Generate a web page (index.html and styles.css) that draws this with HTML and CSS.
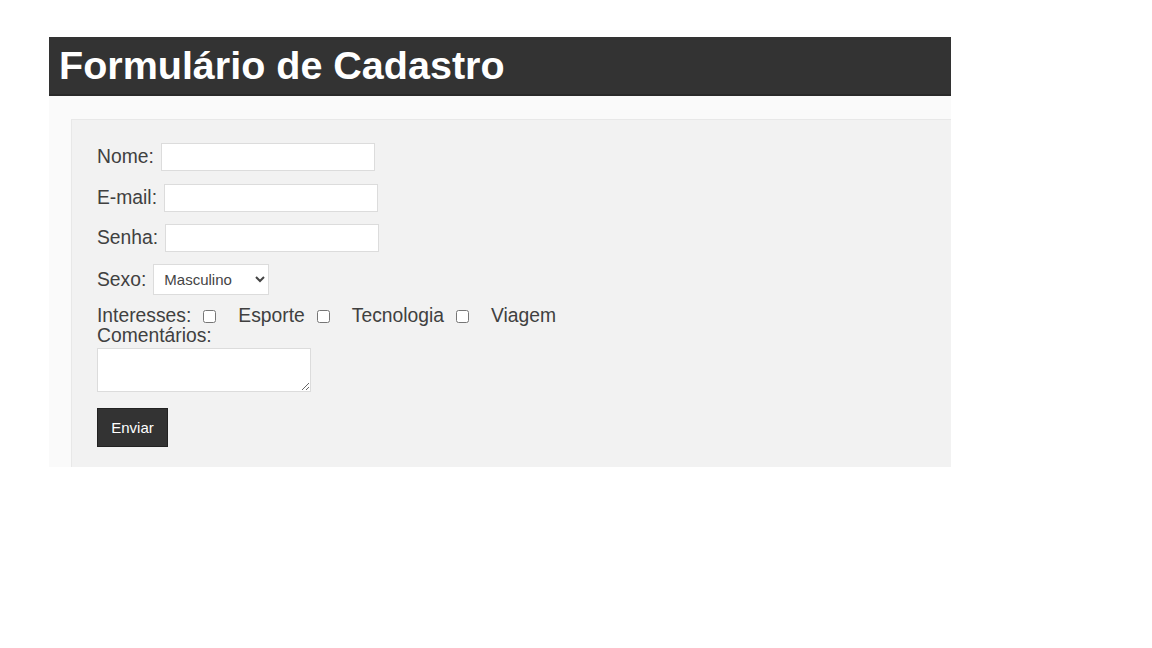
FILE: index.html
```html
<!DOCTYPE html>
<html lang="pt-BR">
<head>
<meta charset="utf-8">
<title>Formulário de Cadastro</title>
<link rel="stylesheet" href="styles.css">
</head>
<body>
<div class="page">
  <header class="header">
    <h1 class="title">Formulário de Cadastro</h1>
  </header>
  <main class="content">
    <form class="form">
      <div class="field">
        <label class="label" for="nome">Nome:</label>
        <input class="input" id="nome" type="text">
      </div>
      <div class="field">
        <label class="label" for="email">E-mail:</label>
        <input class="input" id="email" type="email">
      </div>
      <div class="field">
        <label class="label" for="senha">Senha:</label>
        <input class="input" id="senha" type="password">
      </div>
      <div class="field">
        <label class="label" for="sexo">Sexo:</label>
        <select class="select" id="sexo">
          <option>Masculino</option>
          <option>Feminino</option>
        </select>
      </div>
      <div class="interests">
        <span class="label">Interesses:</span>
        <input class="check" type="checkbox" id="esp"><label class="label" for="esp">Esporte</label>
        <input class="check" type="checkbox" id="tec"><label class="label" for="tec">Tecnologia</label>
        <input class="check" type="checkbox" id="via"><label class="label" for="via">Viagem</label>
      </div>
      <label class="label comments-label" for="com">Comentários:</label>
      <textarea class="textarea" id="com"></textarea>
      <button class="button" type="button">Enviar</button>
    </form>
  </main>
</div>
</body>
</html>
```

FILE: styles.css
```css
html, body {
  margin: 0;
  padding: 0;
  background: #ffffff;
}

body {
  font-family: "Liberation Sans", Arial, sans-serif;
  color: #333333;
}

.page {
  width: 902px;
  margin: 37px 0 0 49px;
  overflow: hidden;
}

.header {
  background: #333333;
  height: 59px;
  box-shadow: inset 0 -2px 0 #2a2a2a;
  display: flex;
  align-items: center;
  padding-left: 10px;
}

.title {
  margin: 0;
  color: #ffffff;
  font-size: 39.5px;
  font-weight: bold;
  line-height: 1;
  padding-bottom: 2px;
}

.content {
  background: #fafafa;
  padding: 23px 0 0 22px;
}

.form {
  background: #f2f2f2;
  border-top: 1px solid #e8e8e8;
  border-left: 1px solid #e8e8e8;
  padding: 23px 25px 20px 25px;
  display: flex;
  flex-direction: column;
  align-items: flex-start;
}

.field {
  display: flex;
  align-items: center;
  gap: 7px;
  margin-bottom: 12px;
}

.field:first-child {
  margin-bottom: 13px;
}

.label {
  font-size: 19.3px;
  line-height: 20px;
  color: #404040;
}

.input {
  width: 214px;
  height: 28px;
  box-sizing: border-box;
  border: 1px solid #dcdcdc;
  background: #ffffff;
  margin: 0;
}

.select {
  height: 31px;
  width: 116px;
  box-sizing: border-box;
  border: 1px solid #dcdcdc;
  background: #ffffff;
  font-family: "Liberation Sans", Arial, sans-serif;
  font-size: 15px;
  color: #444444;
  padding: 0 6px;
  margin: 0;
}

.interests {
  display: flex;
  align-items: center;
  margin-top: -1px;
}

.check {
  width: 13px;
  height: 13px;
  margin: 0 22px 0 12px;
}

.comments-label {
  display: block;
}

.textarea {
  width: 214px;
  height: 44px;
  box-sizing: border-box;
  border: 1px solid #dcdcdc;
  background: #ffffff;
  margin: 2px 0 16px 0;
  font-family: "Liberation Sans", Arial, sans-serif;
}

.button {
  width: 71px;
  height: 39px;
  background: #333333;
  color: #ffffff;
  border: 1px solid #222222;
  font-family: "Liberation Sans", Arial, sans-serif;
  font-size: 15px;
  padding: 0;
  cursor: pointer;
}
```
